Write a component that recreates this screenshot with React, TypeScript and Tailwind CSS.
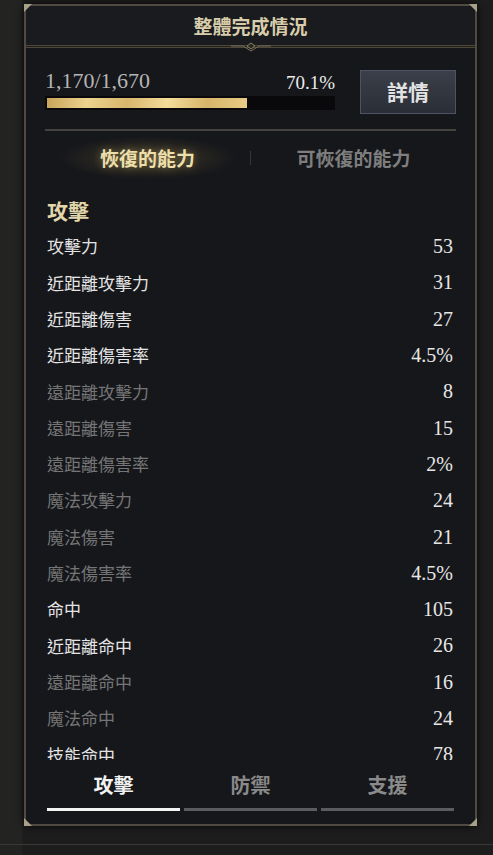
import React from "react"

const cjk = { fontFamily: '"Noto Sans CJK TC", "Noto Sans", sans-serif' }
const serif = { fontFamily: '"Liberation Serif", "DejaVu Serif", serif' }

type Stat = { label: string; value: string; dim?: boolean }

const stats: Stat[] = [
	{ label: "攻擊力", value: "53" },
	{ label: "近距離攻擊力", value: "31" },
	{ label: "近距離傷害", value: "27" },
	{ label: "近距離傷害率", value: "4.5%" },
	{ label: "遠距離攻擊力", value: "8", dim: true },
	{ label: "遠距離傷害", value: "15", dim: true },
	{ label: "遠距離傷害率", value: "2%", dim: true },
	{ label: "魔法攻擊力", value: "24", dim: true },
	{ label: "魔法傷害", value: "21", dim: true },
	{ label: "魔法傷害率", value: "4.5%", dim: true },
	{ label: "命中", value: "105" },
	{ label: "近距離命中", value: "26" },
	{ label: "遠距離命中", value: "16", dim: true },
	{ label: "魔法命中", value: "24", dim: true },
	{ label: "技能命中", value: "78" },
]

const Corner: React.FC<{ className: string; flip?: string }> = ({ className, flip }) => (
	<svg className={`pointer-events-none absolute h-[10px] w-[10px] ${className}`} viewBox="0 0 10 10" style={flip ? { transform: flip } : undefined}>
		<path d="M0 0 H8 L0 8 Z" fill="#a8a089" />
	</svg>
)

export default function App() {
	return (
		<div className="relative h-[855px] w-full overflow-hidden bg-[#1d1d1e]" style={cjk}>
			{/* left textured strip */}
			<div className="absolute left-0 top-0 h-full w-[22px] bg-[#232322]" />
			<div className="absolute bottom-[10px] left-0 h-px w-full bg-[#383836]" />

			<div className="relative ml-[24px] mt-[4px] flex h-[822px] w-[453px] flex-col rounded-[6px] border-2 border-[#4f4b42] bg-[#16171b] shadow-[0_0_8px_rgba(0,0,0,0.8)]">
				<Corner className="-left-[2px] -top-[2px]" />
				<Corner className="-right-[2px] -top-[2px]" flip="scaleX(-1)" />
				<Corner className="-bottom-[2px] -left-[2px]" flip="scaleY(-1)" />
				<Corner className="-bottom-[2px] -right-[2px]" flip="scale(-1,-1)" />

				{/* header */}
				<div className="flex h-[39px] shrink-0 items-center justify-center bg-[#1a1b1e] pt-[2px]">
					<span className="text-[19px] font-bold text-[#d8cdab]">整體完成情況</span>
				</div>
				<div className="relative h-[3px] shrink-0 border-t border-b border-[#4c473b] bg-[#221f19]">
					<svg className="absolute left-1/2 top-[-4px] h-[10px] w-[40px] -translate-x-1/2" viewBox="0 0 40 10">
						<path d="M0 4 H12 L20 9 L28 4 H40" stroke="#7a715a" strokeWidth="1" fill="none" />
						<path d="M16 4 L20 1 L24 4 L20 7 Z" fill="#2a2620" stroke="#8a805f" strokeWidth="1" />
					</svg>
				</div>

				{/* progress */}
				<div className="flex h-[66px] shrink-0 items-end px-[19px]">
					<div className="mb-[4px] flex w-[290px] flex-col">
						<div className="flex items-end justify-between leading-none" style={serif}>
							<span className="text-[22px] text-[#b5b5b5]">1,170/1,670</span>
							<span className="text-[19px] text-[#ececec]">70.1%</span>
						</div>
						<div className="mt-[4px] h-[14px] w-full bg-[#09090b] p-[2px]">
							<div className="h-full w-[70.1%] bg-[linear-gradient(100deg,#c8a35a_0%,#ecd38e_20%,#d9b66c_40%,#f3dc9a_60%,#d8b46a_80%,#e8cc86_100%)]" />
						</div>
					</div>
					<button className="ml-auto flex h-[44px] w-[96px] items-center justify-center border border-[#4d5361] bg-[linear-gradient(180deg,#3a3f49,#2a2e36)] text-[21px] font-bold text-[#e3e3e3]">
						詳情
					</button>
				</div>

				<div className="mx-[19px] mt-[15px] h-[2px] shrink-0 bg-[#45433e]" />

				{/* tabs */}
				<div className="relative flex h-[54px] shrink-0 items-center px-[19px]">
					<div className="relative flex flex-1 items-center justify-center">
						<div className="absolute h-[44px] w-[180px] rounded-full bg-[radial-gradient(ellipse_at_center,rgba(160,140,70,0.28),rgba(160,140,70,0)_70%)]" />
						<span className="relative text-[19px] font-bold text-[#ecdfab] [text-shadow:0_0_8px_rgba(230,200,110,0.45)]">恢復的能力</span>
					</div>
					<div className="h-[14px] w-px bg-[#34343a]" />
					<div className="flex flex-1 items-center justify-center">
						<span className="text-[19px] font-bold text-[#7e7e7e]">可恢復的能力</span>
					</div>
				</div>

				{/* stats list, last row is cut by the scroll area like the game UI */}
				<div className="h-[575px] shrink-0 overflow-hidden px-[21px] pt-[7px]">
					<div className="text-[21px] font-bold leading-[36px] text-[#e2d7aa]">攻擊</div>
					{stats.map((s) => (
						<div key={s.label} className="flex h-[36.3px] items-center justify-between pr-[1px]">
							<span className={`text-[17px] ${s.dim ? "text-[#757575]" : "text-[#e4e4e4]"}`}>{s.label}</span>
							<span className="text-[20px] text-[#e6e6e6]" style={serif}>
								{s.value}
							</span>
						</div>
					))}
				</div>

				{/* bottom tabs */}
				<div className="flex shrink-0 gap-[4px] px-[21px] pt-[7px]">
					{["攻擊", "防禦", "支援"].map((t, i) => (
						<div key={t} className="flex flex-1 flex-col items-center">
							<span className={`text-[20px] font-bold leading-[36px] ${i === 0 ? "text-[#f2f2f2]" : "text-[#8a8a8a]"}`}>{t}</span>
							<div className={`mt-[5px] h-[3px] w-full ${i === 0 ? "bg-[#f4f4f4]" : "bg-[#5c5c60]"}`} />
						</div>
					))}
				</div>
			</div>
		</div>
	)
}
